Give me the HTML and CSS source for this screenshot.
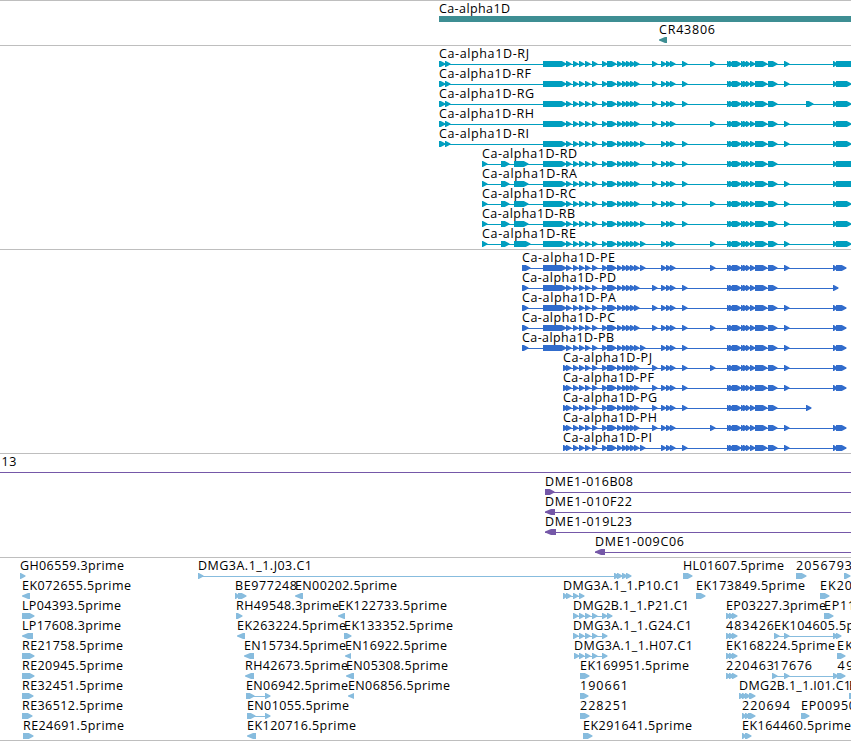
FILE: index.html
```html
<!DOCTYPE html>
<html lang="en">
<head>
    <meta charset="UTF-8">
    <meta name="viewport" content="width=device-width, initial-scale=1.0">
    <title>Genome Browser</title>
    <link rel="stylesheet" href="styles.css">
</head>
<body>
    <main class="browser">
        <section class="track genes" id="genes"></section>
        <section class="track transcripts" id="transcripts"></section>
        <section class="track proteins" id="proteins"></section>
        <section class="track clones" id="clones"></section>
        <section class="track ests" id="ests"></section>
    </main>
    <script src="tracks.js"></script>
</body>
</html>
```
FILE: styles.css
```css
body {
    margin: 0;
    background-color: #fff;
    font-family: "Open Sans", "Noto Sans", sans-serif;
    overflow: hidden;
}
.browser {
    display: flex;
    flex-direction: column;
    border-bottom: 1px solid #bebebe;
}
.track {
    box-sizing: border-box;
    border-top: 1px solid #bebebe;
    height: 204px;
    overflow: hidden;
}
.genes {
    height: 45px;
    color: #3e8e93;
    display: grid;
    row-gap: 1px;
    align-content: start;
}
.transcripts {
    color: #009ebf;
}
.proteins {
    color: #316ccc;
}
.clones {
    height: 104px;
    color: #7558a8;
}
.ests {
    height: 183px;
    color: #87bcde;
}
.row {
    display: block;
    width: 100%;
    height: 20px;
    overflow: visible;
    fill: currentColor;
}
.label {
    fill: #000;
    font-size: 12.5px;
}
```
FILE: tracks.js
```js
const NS = "http://www.w3.org/2000/svg";

function add(parent, name, attrs) {
    const el = document.createElementNS(NS, name);
    for (const key in attrs) el.setAttribute(key, attrs[key]);
    parent.appendChild(el);
    return el;
}

// block: [start, end, direction], direction is "l", "r" (default) or "box"
function drawBlock(svg, block) {
    const [a, b, dir] = block;
    const tip = Math.min(b - a, dir === "l" ? 6 : 5);
    let points;
    if (dir === "box") {
        points = [a, 15, b, 15, b, 21, a, 21];
    } else if (dir === "l") {
        points = [b, 15, a + tip, 15, a, 17.5, a, 18.5, a + tip, 21, b, 21];
    } else {
        const s = b - tip + 0.8;
        points = [a, 15, s, 15, b + 0.5, 17.5, b + 0.5, 18.5, s, 21, a, 21];
    }
    add(svg, "polygon", { points: points.join(" ") });
}

// feature: [name, x, label width, blocks, line end]
function drawRow(id, features) {
    const svg = add(document.getElementById(id), "svg", { class: "row" });
    features.forEach(([name, x, width, blocks, end]) => {
        const first = blocks.length ? blocks[0][0] : 0;
        if (end) add(svg, "rect", { x: first, y: 18, width: end - first, height: 1 });
        blocks.forEach(block => drawBlock(svg, block));
    });
    features.forEach(([name, x, width]) => {
        if (!name) return;
        const text = add(svg, "text", { class: "label", x: x, y: 12, textLength: width });
        text.textContent = name;
    });
}

// genes
drawRow("genes", [["Ca-alpha1D", 439, 71, [[439, 851, "box"]]]]);
drawRow("genes", [["CR43806", 659, 56, [[659, 667, "l"]]]]);

// exons shared by every splice form
const small = x => [x, x + 5];
const common = [
    ...[566, 573, 579, 585, 592, 602].map(small), [607, 616],
    ...[617, 622, 626, 630, 634, 661, 666, 670].map(small),
    [727, 731], [729, 734], [732, 741], [741, 745], [743, 748], [746, 750],
    [750, 755], [755, 767], [768, 777]
];

const rStartA = [[439, 445], [445, 450], [543, 566]];
const rStartB = [[482, 487], [501, 509], [514, 528], [543, 566]];
const tail = [[833, 837], [836, 851]];
const longTail = [[833, 837], [836, 851, "box"]];

[
    ["J", 90, rStartA, [652, 682, 710, 784], longTail],
    ["F", 92, rStartA, [652, 682, 784], tail],
    ["G", 95, rStartA, [652, 682], [[806, 813], ...tail]],
    ["H", 95, rStartA, [652, 710, 784], tail],
    ["I", 90, rStartA, [640, 682, 784], tail],
    ["D", 95, rStartB, [652, 682], longTail],
    ["A", 95, rStartB, [652, 682, 784], longTail],
    ["C", 94, rStartB, [652, 682, 710, 784], tail],
    ["B", 93, rStartB, [640, 682, 784], tail],
    ["E", 94, [[482, 487], [501, 509], [514, 530], [543, 566]], [640, 710, 784], tail]
].forEach(([form, width, start, extra, end]) => {
    const blocks = [...start, ...common, ...extra.map(small), ...end];
    drawRow("transcripts", [["Ca-alpha1D-R" + form, start[0][0], width, blocks, 851]]);
});

const pStartA = [[522, 528], [543, 566]];
const pStartB = [[563, 568]];
const pTail = [[833, 837], [836, 846]];

[
    ["E", 93, [[522, 530], [543, 566]], [640, 710, 784], pTail],
    ["D", 94, pStartA, [652, 682], [[833, 838]]],
    ["A", 94, pStartA, [652, 682, 784], pTail],
    ["C", 93, pStartA, [652, 682, 710, 784], pTail],
    ["B", 92, pStartA, [640, 682, 784], pTail],
    ["J", 89, pStartB, [652, 682, 710, 784], pTail],
    ["F", 91, pStartB, [652, 682, 784], pTail],
    ["G", 94, pStartB, [652, 682], [[806, 811]]],
    ["H", 94, pStartB, [652, 710, 784], pTail],
    ["I", 89, pStartB, [640, 682, 784], pTail]
].forEach(([form, width, start, extra, end]) => {
    const blocks = [...start, ...common, ...extra.map(small), ...end];
    drawRow("proteins", [["Ca-alpha1D-P" + form, start[0][0], width, blocks, end[end.length - 1][1]]]);
});

// BAC clones
[
    ["13", 1.5, 15, [], 851],
    ["DME1-016B08", 545, 88, [[545, 554]], 851],
    ["DME1-010F22", 545, 87, [[545, 555, "l"]], 851],
    ["DME1-019L23", 545, 87, [[545, 556, "l"]], 851],
    ["DME1-009C06", 595, 89, [[595, 605, "l"]], 851]
].forEach(clone => drawRow("clones", [clone]));

// cDNAs and ESTs
const triple = [[726, 731], [729, 734], [732, 737]];
[
    [
        ["GH06559.3prime", 20, 104, [[20, 25]]],
        ["DMG3A.1_1.J03.C1", 198, 114, [[198, 203], [614, 619], [617, 622], [622, 627], [626, 631]], 631],
        ["HL01607.5prime", 683, 101, [[683, 692]]],
        ["2056793", 796, 56, [[796, 806]]],
        ["", 0, 0, [[844, 850]]]
    ],
    [
        ["EK072655.5prime", 22, 109, [[22, 30, "l"]]],
        ["BE977248", 235, 62, [[235, 239], [238, 246]]],
        ["EN00202.5prime", 295, 102, [[295, 303, "l"]]],
        ["DMG3A.1_1.P10.C1", 563, 117, [[563, 567], [566, 571], [573, 578], [579, 584]], 584],
        ["EK173849.5prime", 696, 109, [[696, 705]]],
        ["EK20", 820, 32, [[820, 829]]]
    ],
    [
        ["LP04393.5prime", 22, 99, [[22, 34]]],
        ["RH49548.3prime", 236, 103, [[236, 242]]],
        ["EK122733.5prime", 338, 109, [[338, 345, "l"]]],
        ["DMG2B.1_1.P21.C1", 573, 116, [573, 579, 585, 592, 602, 607].map(small), 612],
        ["EP03227.3prime", 726, 100, triple],
        ["EP11", 824, 31, [[824, 833]]]
    ],
    [
        ["LP17608.3prime", 22, 99, [[22, 33, "l"]]],
        ["EK263224.5prime", 237, 109, [[237, 245, "l"]]],
        ["EK133352.5prime", 344, 109, [[344, 351]]],
        ["DMG3A.1_1.G24.C1", 573, 119, [573, 579, 585, 592, 602].map(small), 607],
        ["483426", 726, 48, triple],
        ["EK104605.5prime", 774, 109, [[774, 779], [784, 789], [833, 838], [836, 841]], 841]
    ],
    [
        ["RE21758.5prime", 22, 101, [[22, 34]]],
        ["EN15734.5prime", 244, 102, [[244, 254, "l"]]],
        ["EN16922.5prime", 345, 102, [[345, 351, "l"]]],
        ["DMG3A.1_1.H07.C1", 574, 119, [574, 579, 585, 592, 602].map(small), 607],
        ["EK168224.5prime", 726, 109, triple],
        ["EK", 837, 16, [[837, 845]]]
    ],
    [
        ["RE20945.5prime", 22, 101, [[22, 34]]],
        ["RH42673.5prime", 245, 103, [[245, 254, "l"]]],
        ["EN05308.5prime", 346, 102, [[346, 354, "l"]]],
        ["EK169951.5prime", 580, 109, [[580, 589]]],
        ["220463", 726, 48, triple],
        ["17676", 773, 39, [[772, 777], [784, 789], [833, 838], [837, 845]], 845],
        ["49", 837.5, 16, []]
    ],
    [
        ["RE32451.5prime", 22, 101, [[22, 33]]],
        ["EN06942.5prime", 246, 102, [[246, 254], [265, 270]], 270],
        ["EN06856.5prime", 348, 102, [[348, 354, "l"]]],
        ["190661", 580, 48, [[580, 588]]],
        ["DMG2B.1_1.I01.C1", 739, 112, [[739, 744], [742, 747], [745, 750], [749, 755]]],
        ["E", 849, 7, [[849, 858]]]
    ],
    [
        ["RE36512.5prime", 22, 101, [[22, 32]]],
        ["EN01055.5prime", 247, 102, [[247, 255], [265, 270]], 270],
        ["228251", 580, 48, [[580, 589]]],
        ["220694", 742, 48, [[742, 746], [745, 750], [748, 755]]],
        ["EP00950", 801, 55, [[801, 809]]]
    ],
    [
        ["RE24691.5prime", 23, 101, [[23, 33]]],
        ["EK120716.5prime", 247, 109, [[247, 256, "l"]]],
        ["EK291641.5prime", 583, 109, [[583, 592]]],
        ["EK164460.5prime", 742, 109, [[742, 746], [745, 751]]]
    ]
].forEach(row => drawRow("ests", row));
```
